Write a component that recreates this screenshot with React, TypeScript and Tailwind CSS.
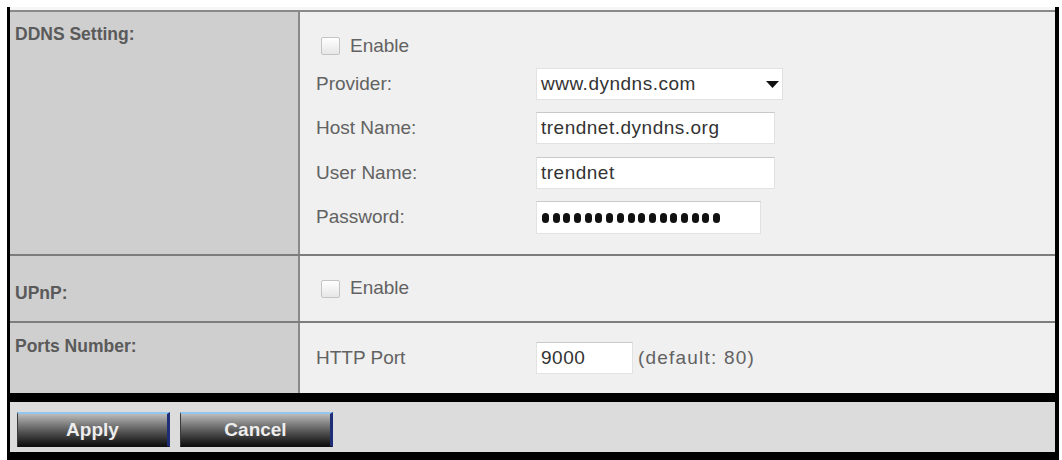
import React from 'react';

function Checkbox() {
  return (
    <span className="inline-block h-[18px] w-[19px] shrink-0 rounded-[2px] border border-[#c4c4c4] bg-gradient-to-b from-[#ffffff] to-[#e6e6e6]" />
  );
}

function Field({ width, children }: { width: string; children: React.ReactNode }) {
  return (
    <div
      className={`flex h-full items-center border border-[#e2e2e2] border-t-[#c9c9c9] bg-white pl-[4px] text-[19px] tracking-[0.5px] text-[#333] ${width}`}
    >
      {children}
    </div>
  );
}

function FormRow({ label, className, children }: { label: string; className: string; children: React.ReactNode }) {
  return (
    <div className={`flex items-center ${className}`}>
      <span className="w-[220px] shrink-0 text-[19px] text-[#626262]">{label}</span>
      {children}
    </div>
  );
}

function GlossButton({ label }: { label: string }) {
  return (
    <button className="flex h-[35px] w-[153px] items-center justify-center border-l border-t-2 border-r-[3px] border-b border-l-[#3a3a3a] border-t-[#93c6ee] border-r-[#1f2c78] border-b-[#111] bg-gradient-to-b from-[#bcbcbc] via-[#5e5e5e] to-[#101010] text-[19px] font-bold text-[#ededed]">
      {label}
    </button>
  );
}

export default function App() {
  return (
    <div className="h-[460px] w-[1062px] bg-white pl-[7px] pt-[7px] font-['Liberation_Sans',Arial,sans-serif]">
      <div className="flex h-[453px] w-[1052px] flex-col border-l-[3px] border-r-[4px] border-black">
        <div className="h-[3px] bg-[#f6f6f6]" />
        <div className="h-[2px] bg-[#8a8a8a]" />

        {/* DDNS */}
        <div className="flex h-[242px]">
          <div className="w-[290px] shrink-0 border-r-2 border-[#8a8a8a] bg-[#cfcfcf] pl-[5px] pt-[9px] text-[17.5px] font-bold text-[#5a5a5a]">
            DDNS Setting:
          </div>
          <div className="flex flex-1 flex-col bg-[#f0f0f0] pl-[16px] pt-[18px]">
            <div className="flex h-[32px] items-center gap-[10px] pl-[5px]">
              <Checkbox />
              <span className="text-[19px] text-[#626262]">Enable</span>
            </div>
            <FormRow label="Provider:" className="mt-[6px] h-[32px]">
              <div className="flex h-full w-[247px] items-center justify-between border border-[#e2e2e2] bg-white pl-[4px] pr-[3px] text-[19px] tracking-[0.5px] text-[#333]">
                <span>www.dyndns.com</span>
                <svg width="13" height="7" viewBox="0 0 13 7">
                  <polygon points="0,0 13,0 6.5,7" fill="#111" />
                </svg>
              </div>
            </FormRow>
            <FormRow label="Host Name:" className="mt-[12px] h-[32px]">
              <Field width="w-[239px]">trendnet.dyndns.org</Field>
            </FormRow>
            <FormRow label="User Name:" className="mt-[13px] h-[32px]">
              <Field width="w-[239px]">trendnet</Field>
            </FormRow>
            <FormRow label="Password:" className="mt-[12px] h-[33px]">
              <Field width="w-[225px]">
                <div className="flex gap-[3.7px] pl-[1px]">
                  {Array.from({ length: 17 }).map((_, i) => (
                    <span key={i} className="inline-block h-[10px] w-[7px] rounded-full bg-[#111]" />
                  ))}
                </div>
              </Field>
            </FormRow>
          </div>
        </div>
        <div className="h-[2px] bg-[#7d7d7d]" />

        {/* UPnP */}
        <div className="flex h-[65px]">
          <div className="w-[290px] shrink-0 border-r-2 border-[#8a8a8a] bg-[#cfcfcf] pl-[5px] pt-[24px] text-[17.5px] font-bold text-[#5a5a5a]">
            UPnP:
          </div>
          <div className="flex flex-1 items-center gap-[10px] bg-[#f0f0f0] pl-[21px]">
            <Checkbox />
            <span className="text-[19px] text-[#626262]">Enable</span>
          </div>
        </div>
        <div className="h-[2px] bg-[#7d7d7d]" />

        {/* Ports */}
        <div className="flex h-[70px]">
          <div className="w-[290px] shrink-0 border-r-2 border-[#8a8a8a] bg-[#cfcfcf] pl-[5px] pt-[10px] text-[17.5px] font-bold text-[#5a5a5a]">
            Ports Number:
          </div>
          <div className="flex flex-1 items-center bg-[#f0f0f0] pl-[16px]">
            <FormRow label="HTTP Port" className="h-[32px]">
              <Field width="w-[97px]">9000</Field>
              <span className="ml-[5px] text-[19px] tracking-[1.2px] text-[#626262]">(default: 80)</span>
            </FormRow>
          </div>
        </div>

        <div className="h-[9px] bg-black" />
        <div className="flex h-[50px] gap-[10px] bg-[#dcdcdc] pl-[7px] pt-[10px]">
          <GlossButton label="Apply" />
          <GlossButton label="Cancel" />
        </div>
        <div className="flex-1 bg-black" />
      </div>
    </div>
  );
}
